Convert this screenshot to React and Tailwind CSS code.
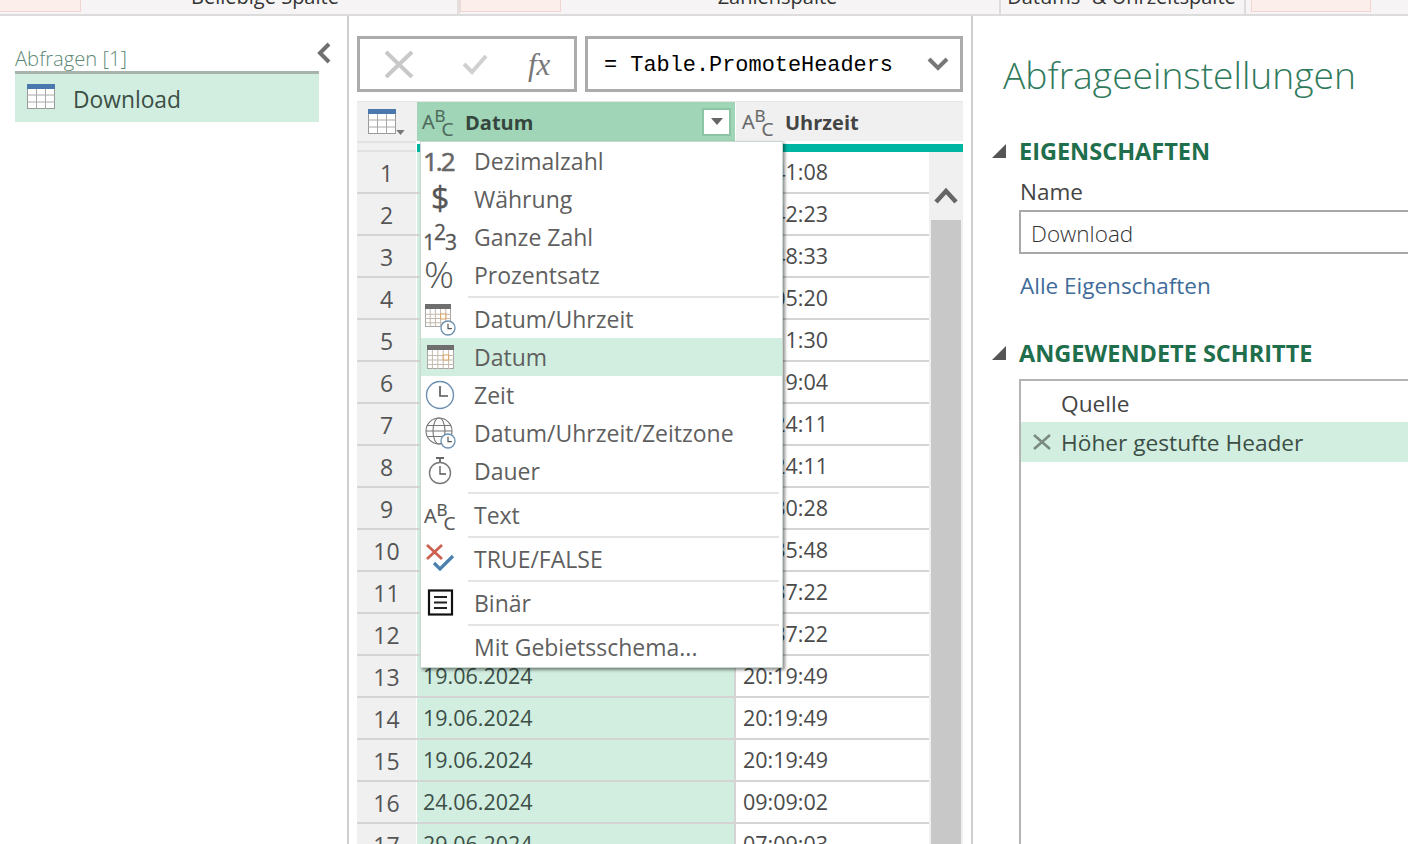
import React from "react";

const font = { fontFamily: '"Open Sans", "Noto Sans", sans-serif' };

const times = [
  "20:41:08", "20:42:23", "20:48:33", "21:05:20", "21:11:30", "21:19:04",
  "21:24:11", "21:24:11", "21:30:28", "21:35:48", "21:37:22", "21:37:22",
  "20:19:49", "20:19:49", "20:19:49", "09:09:02", "07:09:03",
];
const dates = [
  "19.06.2024", "19.06.2024", "19.06.2024", "19.06.2024", "19.06.2024", "19.06.2024",
  "19.06.2024", "19.06.2024", "19.06.2024", "19.06.2024", "19.06.2024", "19.06.2024",
  "19.06.2024", "19.06.2024", "19.06.2024", "24.06.2024", "29.06.2024",
];

const TableIcon = ({ className }) => (
  <svg viewBox="0 0 28 25" className={className} fill="none">
    <rect x="0.5" y="0.5" width="27" height="24" fill="#fff" stroke="#9a9a9a" />
    <rect x="0" y="0" width="28" height="5" fill="#4a78ac" />
    <path d="M0 11h28M0 18h28M9.5 5v20M18.5 5v20" stroke="#a8a8a8" />
  </svg>
);

const AbcIcon = ({ className, color = "#555" }) => (
  <svg viewBox="0 0 32 26" className={`${className} overflow-visible`} fill={color} stroke={color} strokeWidth="0.2" fontFamily="Open Sans, sans-serif">
    <text x="0" y="20" fontSize="20">A</text>
    <text x="12.5" y="13" fontSize="17">B</text>
    <text x="19.5" y="27" fontSize="19">C</text>
  </svg>
);

const Clock = ({ cx, cy, r }) => (
  <g>
    <circle cx={cx} cy={cy} r={r} fill="#fff" stroke="#6b8fb0" strokeWidth="1.3" />
    <path d={`M${cx} ${cy - r * 0.6}V${cy + r * 0.1}H${cx + r * 0.55}`} stroke="#555" strokeWidth="1.2" fill="none" />
  </g>
);

const Calendar = ({ x = 0, y = 0, w = 27, h = 24 }) => {
  const cols = [1, 2, 3, 4].map((i) => x + (w * i) / 5);
  const rows = [1, 2, 3].map((i) => y + 6 + ((h - 6) * i) / 4);
  return (
    <g>
      <rect x={x + 0.5} y={y + 0.5} width={w - 1} height={h - 1} fill="#fff" stroke="#a5a5a5" />
      <rect x={x} y={y} width={w} height="5" fill="#6e6e6e" />
      {cols.map((c) => <path key={c} d={`M${c} ${y + 5}V${y + h}`} stroke="#c4b9ae" />)}
      {rows.map((r) => <path key={r} d={`M${x} ${r}H${x + w}`} stroke="#c4b9ae" />)}
      <rect x={x + w * 0.6} y={y + 10} width={w * 0.2} height="5" fill="#fff" stroke="#d9a05f" />
    </g>
  );
};

const iconBox = "w-[36px] h-[32px] overflow-visible";

const menuIcons = {
  decimal: (
    <svg viewBox="0 0 36 32" className={iconBox} fill="#666" stroke="#666" strokeWidth="0.6" fontFamily="Open Sans, sans-serif">
      <text x="1" y="26" fontSize="26" letterSpacing="-2">1.2</text>
    </svg>
  ),
  currency: (
    <svg viewBox="0 0 36 32" className={iconBox} fill="#555" stroke="#555" strokeWidth="0.4" fontFamily="Open Sans, sans-serif">
      <text x="9" y="27" fontSize="32">$</text>
    </svg>
  ),
  whole: (
    <svg viewBox="0 0 36 32" className={iconBox} fill="#555" stroke="#555" strokeWidth="0.3" fontFamily="Open Sans, sans-serif">
      <text x="1" y="29" fontSize="21">1</text>
      <text x="12" y="19" fontSize="21">2</text>
      <text x="23" y="29" fontSize="21">3</text>
    </svg>
  ),
  percent: (
    <svg viewBox="0 0 36 32" className={iconBox} fill="#555" fontFamily="Open Sans, sans-serif">
      <text x="2" y="29" fontSize="36" fontWeight="300" textLength="30" lengthAdjust="spacingAndGlyphs">%</text>
    </svg>
  ),
  datetime: (
    <svg viewBox="0 0 36 32" className={iconBox}>
      <Calendar x={3} y={1} w={26} h={23} />
      <Clock cx={26} cy={25} r={7} />
    </svg>
  ),
  date: (
    <svg viewBox="0 0 36 32" className={iconBox}>
      <Calendar x={5} y={4} w={27} h={24} />
    </svg>
  ),
  time: (
    <svg viewBox="0 0 36 32" className={iconBox}>
      <circle cx="18" cy="16" r="13.5" fill="#fff" stroke="#6b8fb0" strokeWidth="1.4" />
      <path d="M18 7v10h8" stroke="#555" strokeWidth="1.6" fill="none" />
    </svg>
  ),
  zone: (
    <svg viewBox="0 0 36 32" className={iconBox} fill="none">
      <circle cx="17" cy="14" r="13" stroke="#777" strokeWidth="1.1" />
      <ellipse cx="17" cy="14" rx="6" ry="13" stroke="#777" strokeWidth="1.1" />
      <path d="M5 8.5h24M5 19.5h24M4 14h26" stroke="#777" strokeWidth="1.1" />
      <Clock cx={26} cy={24} r={7} />
    </svg>
  ),
  duration: (
    <svg viewBox="0 0 36 32" className={iconBox} fill="none">
      <circle cx="18" cy="18" r="10.5" fill="#fff" stroke="#777" strokeWidth="1.4" />
      <path d="M14 3h8M18 3v4" stroke="#666" strokeWidth="1.8" />
      <path d="M18 11v8h6" stroke="#555" strokeWidth="1.3" />
    </svg>
  ),
  text: <AbcIcon className="w-[32px] h-[27px]" />,
  bool: (
    <svg viewBox="0 0 36 32" className={iconBox} fill="none">
      <path d="M5 2l15 14M20 2L5 16" stroke="#cc6150" strokeWidth="2.8" />
      <path d="M12 20l6 6L31 13" stroke="#4a7fae" strokeWidth="3.2" />
    </svg>
  ),
  binary: (
    <svg viewBox="0 0 36 32" className={iconBox} fill="none">
      <rect x="7" y="3.5" width="23" height="24" stroke="#111" strokeWidth="2.2" />
      <path d="M12 10h13M12 15.5h13M12 21h13" stroke="#222" strokeWidth="1.8" />
    </svg>
  ),
};

const menuGroups = [
  [["decimal", "Dezimalzahl"], ["currency", "Währung"], ["whole", "Ganze Zahl"], ["percent", "Prozentsatz"]],
  [["datetime", "Datum/Uhrzeit"], ["date", "Datum"], ["time", "Zeit"], ["zone", "Datum/Uhrzeit/Zeitzone"], ["duration", "Dauer"]],
  [["text", "Text"]],
  [["bool", "TRUE/FALSE"]],
  [["binary", "Binär"]],
  [[null, "Mit Gebietsschema..."]],
];

const TypeMenu = () => (
  <div className="absolute left-[420px] top-[141px] w-[363px] h-[527px] bg-white border border-[#c8d8cf] shadow-[2px_2px_3px_rgba(0,0,0,0.45)] text-[23px] text-[#5f5f5f]">
    {menuGroups.map((group, i) => (
      <div key={i}>
        {i > 0 && (
          <div className="h-[6px] pt-[2px] pl-[47px] pr-[3px]">
            <div className="h-[2px] bg-[#e4e4e4]" />
          </div>
        )}
        {group.map(([icon, label]) => (
          <div key={label} className={`flex items-center h-[38px] ${label === "Datum" ? "bg-[#d2eee0]" : ""}`}>
            <div className="w-[38px] flex justify-center shrink-0">{icon && menuIcons[icon]}</div>
            <span className="ml-[15px]">{label}</span>
          </div>
        ))}
      </div>
    ))}
  </div>
);

const Row = ({ n, date, time }) => (
  <div className="flex h-[42px] shrink-0 border-b-2 border-[#d4d4d4] text-[21.5px] leading-[39px]">
    <div className="w-[59px] shrink-0 bg-[#f0f0f0] text-center text-[23px] leading-[43px] text-[#555]">{n}</div>
    <div className="w-[319px] shrink-0 ml-px pl-[6px] bg-[#d2eee0] text-[#3d4f47] border-r-2 border-[#d4d4d4]">{date}</div>
    <div className="flex-1 pl-[7px] text-[#4a4a4a]">{time}</div>
  </div>
);

const Section = ({ children }) => (
  <div className="flex items-center">
    <div className="w-0 h-0 ml-[19px] border-l-[14px] border-l-transparent border-b-[14px] border-b-[#555]" />
    <span className="ml-[13px] text-[23.5px] font-bold text-[#1f6e4c] leading-[30px]">{children}</span>
  </div>
);

export default function App() {
  return (
    <div style={font} className="relative w-[1408px] h-[844px] overflow-hidden bg-white flex flex-col">
      {/* ribbon, cut off at the top */}
      <div className="h-[16px] shrink-0 flex bg-[#f6f4f4] border-b-2 border-[#dcdcdc] overflow-hidden text-[#333] text-[20px] leading-none whitespace-nowrap">
        <div className="w-[81px] h-[12px] bg-[#fbeeeb] border-r border-b border-[#f0d5d0]" />
        <div className="w-[375px] text-center -mt-[13px] pr-[7px]">Beliebige Spalte</div>
        <div className="w-[3px] ml-[1px] bg-[#e4e0e0]" />
        <div className="w-[101px] h-[12px] bg-[#fbeeeb] border border-t-0 border-[#f0d5d0]" />
        <div className="w-[438px] text-center -mt-[13px] pr-[5px]">Zahlenspalte</div>
        <div className="w-[2px] bg-[#e0dcdc]" />
        <div className="w-[243px] text-center -mt-[13px] pr-[2px]">Datums- &amp; Uhrzeitspalte</div>
        <div className="w-[2px] bg-[#e0dcdc]" />
        <div className="w-[5px]" />
        <div className="w-[120px] h-[12px] bg-[#fbeeeb] border border-t-0 border-[#f0d5d0]" />
      </div>

      <div className="flex flex-1 min-h-0">
        {/* queries */}
        <div className="w-[349px] shrink-0 border-r-2 border-[#d0d0d0] pl-[15px] pr-[28px] pt-[26px]">
          <div className="flex items-start justify-between border-b-[3px] border-[#a9b3ae] h-[32px]">
            <span className="text-[20.2px] font-light leading-[32px] text-[#5d8a76]">Abfragen [1]</span>
            <svg viewBox="0 0 14 22" className="w-[14px] h-[22px] -mr-[12px]" fill="none">
              <path d="M12 2L3 11l9 9" stroke="#707070" strokeWidth="4" />
            </svg>
          </div>
          <div className="flex items-center h-[48px] bg-[#d2eee0]">
            <TableIcon className="w-[28px] h-[25px] ml-[12px] mb-[3px]" />
            <span className="ml-[18px] pt-[4px] text-[22.8px] text-[#3c4f46]">Download</span>
          </div>
        </div>

        {/* formula bar and table */}
        <div className="w-[624px] shrink-0 border-r-2 border-[#d0d0d0] pl-[8px] pr-[8px] pt-[20px] flex flex-col min-h-0">
          <div className="flex gap-[8px] h-[56px] shrink-0">
            <div className="w-[220px] border-[3px] border-[#ababab] flex items-center">
              <svg viewBox="0 0 30 28" className="w-[30px] h-[28px] ml-[24px]" fill="none">
                <path d="M2 2l26 25M28 2L2 27" stroke="#c8c8c8" strokeWidth="4" />
              </svg>
              <svg viewBox="0 0 26 22" className="w-[26px] h-[22px] ml-[48px]" fill="none">
                <path d="M2 11l8 8L24 3" stroke="#d0d0d0" strokeWidth="4" />
              </svg>
              <span className="ml-[40px] text-[31px] leading-none italic text-[#777]" style={{ fontFamily: '"Liberation Serif", serif' }}>fx</span>
            </div>
            <div className="flex-1 border-[3px] border-[#ababab] flex items-center justify-between pl-[16px] pr-[11px]">
              <span className="pt-[5px] text-[21.9px] text-black whitespace-pre" style={{ fontFamily: '"Liberation Mono", monospace' }}>= Table.PromoteHeaders</span>
              <svg viewBox="0 0 22 14" className="w-[22px] h-[14px]" fill="none">
                <path d="M2 2l9 9 9-9" stroke="#777" strokeWidth="4" />
              </svg>
            </div>
          </div>

          <div className="mt-[9px] flex h-[40px] shrink-0 border-t border-[#e4e4e4]">
            <div className="w-[60px] bg-[#f0f0f0] flex items-center pl-[11px]">
              <TableIcon className="w-[28px] h-[25px]" />
              <svg viewBox="0 0 10 6" className="w-[9px] h-[5px] self-end mb-[6px]"><path d="M0 0h10L5 6z" fill="#777" /></svg>
            </div>
            <div className="w-[318px] bg-[#a0d5b8] flex items-center pl-[5px] pr-[4px]">
              <AbcIcon className="w-[32px] h-[26px]" color="#4d6a5b" />
              <span className="ml-[11px] pt-[2px] text-[20px] font-bold text-[#34463d]">Datum</span>
              <div className="ml-auto w-[29px] h-[28px] bg-white border-2 border-[#8cc4a6] flex items-center justify-center">
                <svg viewBox="0 0 12 7" className="w-[12px] h-[7px]"><path d="M0 0h12L6 7z" fill="#666" /></svg>
              </div>
            </div>
            <div className="flex-1 bg-[#f0f0f0] flex items-center pl-[6px] ml-px">
              <AbcIcon className="w-[32px] h-[26px]" color="#666" />
              <span className="ml-[11px] pt-[2px] text-[20px] font-bold text-[#444]">Uhrzeit</span>
            </div>
          </div>

          <div className="flex flex-1 min-h-0 overflow-hidden">
            <div className="w-[572px] shrink-0 flex flex-col">
              <div className="flex h-[11px] shrink-0">
                <div className="w-[59px] bg-[#f0f0f0] border-t-2 border-b-2 border-[#e2e2e2]" />
                <div className="flex-1 pt-[3px] pl-px"><div className="h-[8px] bg-[#00b5a2]" /></div>
              </div>
              {times.map((t, i) => (
                <Row key={i} n={i + 1} date={dates[i]} time={t} />
              ))}
            </div>
            <div className="flex-1 flex flex-col">
              <div className="h-[11px] shrink-0 pt-[3px]"><div className="h-[8px] bg-[#00b5a2]" /></div>
              <div className="h-[68px] shrink-0 bg-[#f0f0f0] flex items-center justify-center pt-[18px]">
                <svg viewBox="0 0 24 18" className="w-[24px] h-[18px]" fill="none">
                  <path d="M2 16L12 5l10 11" stroke="#666" strokeWidth="4.5" />
                </svg>
              </div>
              <div className="flex-1 bg-[#f0f0f0] px-[2px]"><div className="h-full bg-[#c8c8c8]" /></div>
            </div>
          </div>
        </div>

        {/* query settings */}
        <div className="flex-1 min-w-0 pt-[33px] overflow-hidden">
          <div className="pl-[30px] text-[37.2px] font-light leading-[52px] text-[#2f7a5c] whitespace-nowrap">Abfrageeinstellungen</div>
          <div className="mt-[35px]"><Section>EIGENSCHAFTEN</Section></div>
          <div className="pl-[47px] mt-[11px] text-[22.5px] leading-[30px] text-[#444]">Name</div>
          <div className="ml-[46px] mt-[3px] h-[44px] border-2 border-r-0 border-[#a8a8a8] pl-[10px] text-[22.5px] font-light leading-[43px] text-[#333]">Download</div>
          <div className="pl-[47px] mt-[17px] text-[22.5px] leading-[30px] text-[#3f6c9a]">Alle Eigenschaften</div>
          <div className="mt-[37px]"><Section>ANGEWENDETE SCHRITTE</Section></div>
          <div className="ml-[46px] mt-[11px] h-[500px] border-t-2 border-l-2 border-[#b4b4b4] pt-[2px] text-[22.7px]">
            <div className="h-[39px] pl-[40px] leading-[42px] text-[#444]">Quelle</div>
            <div className="h-[40px] bg-[#d2eee0] flex items-center pl-[11px]">
              <svg viewBox="0 0 20 18" className="w-[20px] h-[18px]" fill="none">
                <path d="M2 2l16 14M18 2L2 16" stroke="#7a8a82" strokeWidth="2.6" />
              </svg>
              <span className="ml-[9px] pt-[3px] text-[#3c4f46]">Höher gestufte Header</span>
            </div>
          </div>
        </div>
      </div>

      <TypeMenu />
    </div>
  );
}
